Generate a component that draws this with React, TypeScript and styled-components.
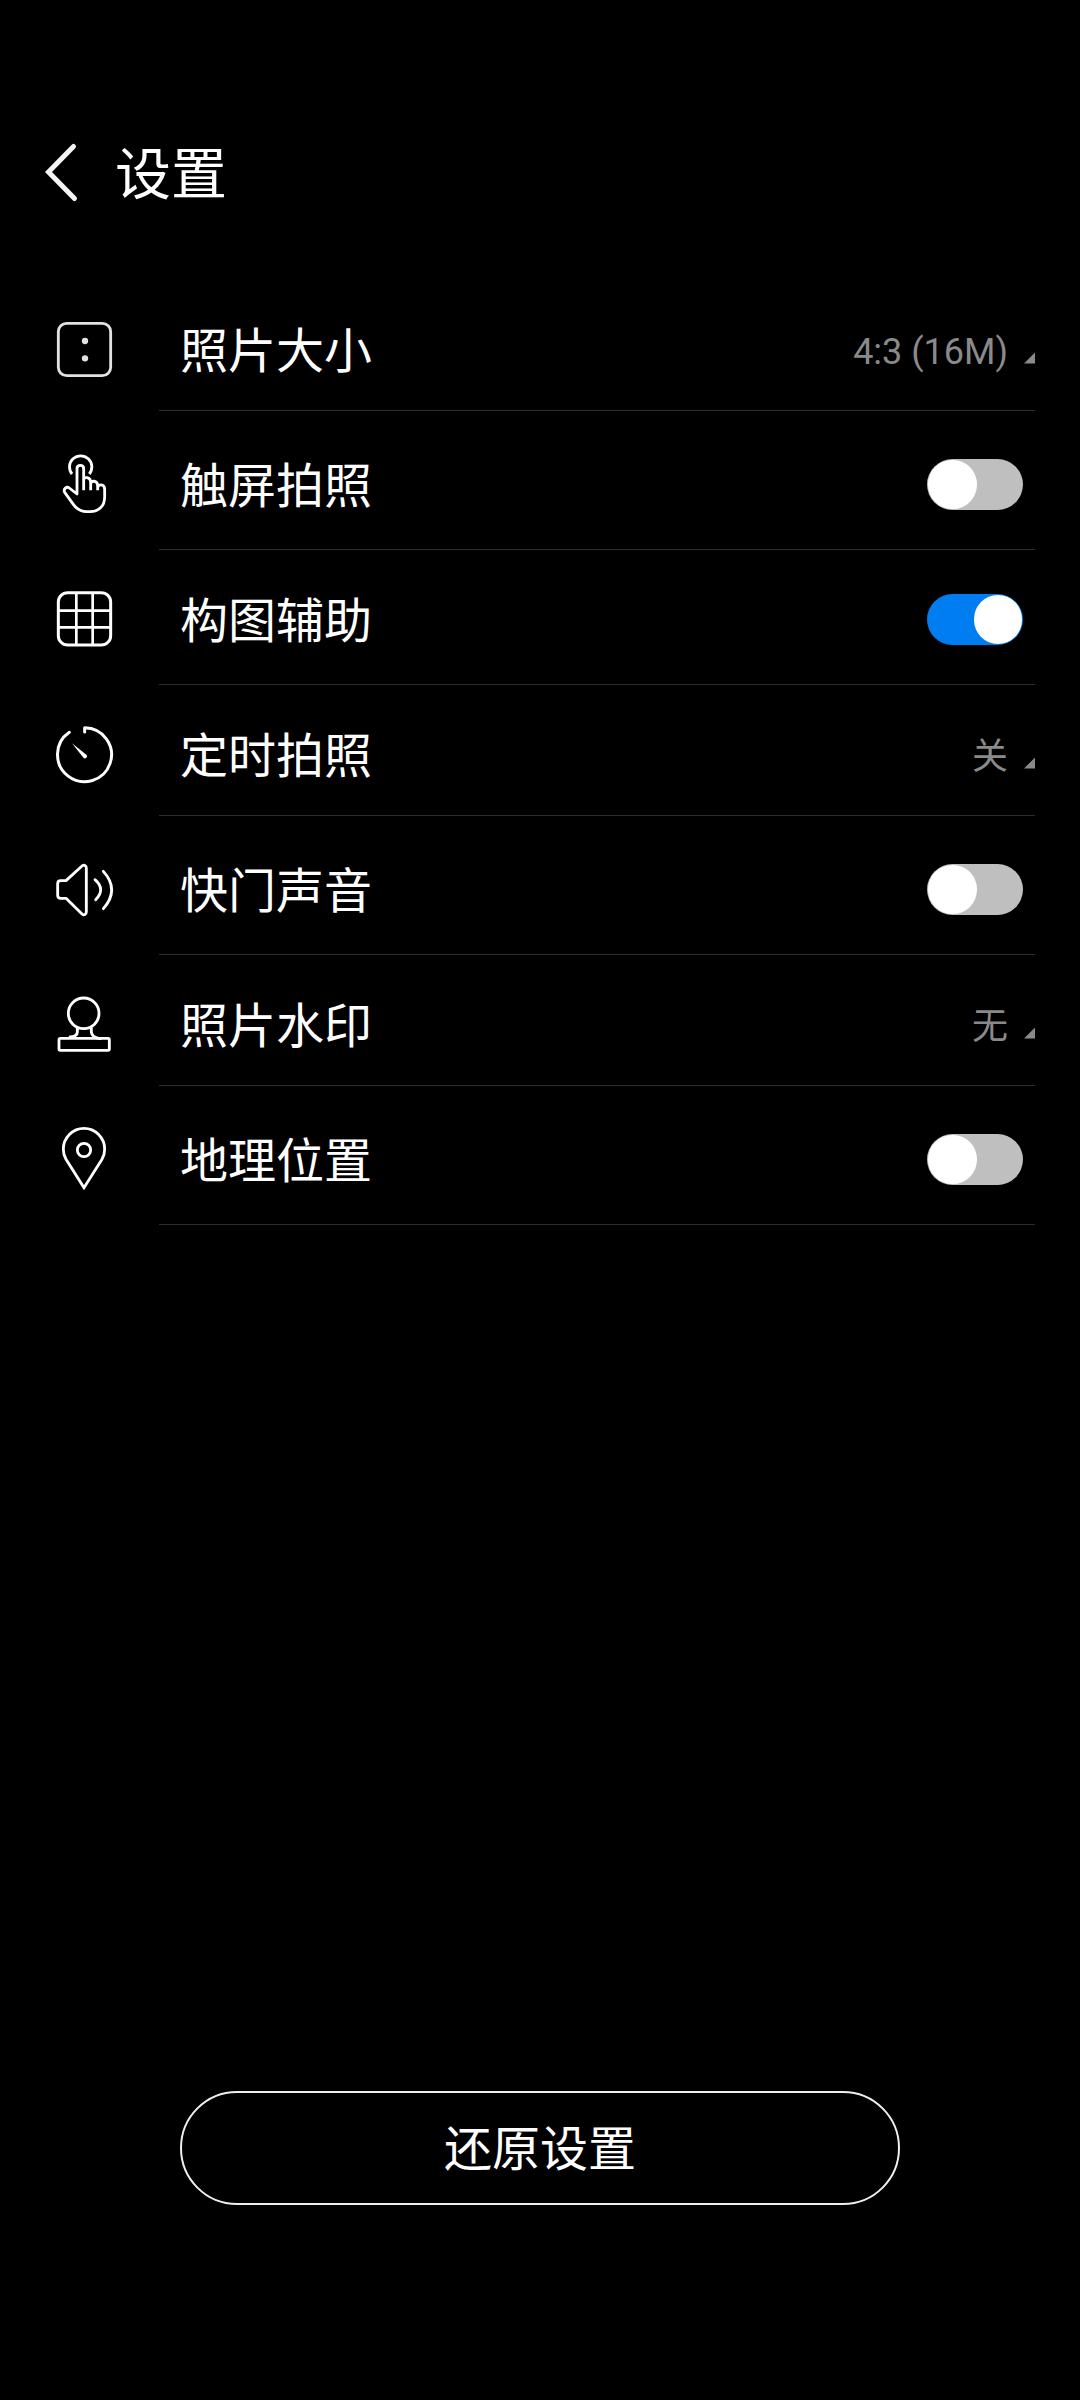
import React, { useState } from "react";
import styled, { createGlobalStyle } from "styled-components";

const GlobalStyle = createGlobalStyle`
  * { box-sizing: border-box; }
  body { margin: 0; background: #000; }
`;

const Screen = styled.main`
  display: flex;
  flex-direction: column;
  width: 1080px;
  height: 2400px;
  padding-bottom: 195px;
  background: #000;
  color: #fff;
  font-family: Roboto, "Noto Sans CJK SC", sans-serif;
`;

const Header = styled.header`
  display: flex;
  align-items: center;
  height: 282px;
  padding: 62px 0 0 42px;
`;

const BackIcon = styled.svg`
  width: 40px;
  height: 64px;
`;

const Title = styled.h1`
  margin: 0 0 0 33px;
  padding-top: 5px;
  font-size: 56px;
  font-weight: 400;
  line-height: 84px;
`;

const List = styled.ul`
  margin: 0;
  padding: 0;
  list-style: none;
`;

const Row = styled.li`
  display: flex;
  height: 135px;
  padding: 0 45px 0 44px;
`;

const RowIcon = styled.svg`
  flex: none;
  width: 80px;
  height: 81px;
  margin: 27px 35px 0 0;
  fill: none;
  stroke: #fff;
  stroke-width: 8.5;
  stroke-linecap: round;
  stroke-linejoin: round;
`;

const RowBody = styled.div<{ $toggle: boolean }>`
  display: flex;
  flex: 1;
  align-items: center;
  height: ${(p) => (p.$toggle ? 133 : 129)}px;
  padding: ${(p) => (p.$toggle ? "3px 12px 0 21px" : "7px 0 0 21px")};
  border-bottom: 1px solid #2d2d2d;
`;

const Label = styled.span`
  flex: 1;
  padding-top: 4px;
  font-size: 48px;
  line-height: 70px;
`;

const Value = styled.span`
  padding-top: 4px;
  color: #8a8a8a;
  font-size: 36px;
  line-height: 52px;
`;

const Corner = styled.span`
  width: 11px;
  height: 11px;
  margin: 17px 0 0 16px;
  background: #8a8a8a;
  clip-path: polygon(100% 0, 100% 100%, 0 100%);
`;

const Track = styled.button<{ $on: boolean }>`
  display: flex;
  align-items: center;
  justify-content: ${(p) => (p.$on ? "flex-end" : "flex-start")};
  width: 96px;
  height: 51px;
  padding: 1px;
  border: 0;
  border-radius: 26px;
  background: ${(p) => (p.$on ? "#007df0" : "#bfbfbf")};
`;

const Knob = styled.span`
  width: 48.5px;
  height: 48.5px;
  border-radius: 50%;
  background: #fff;
`;

const ResetButton = styled.button`
  width: 720px;
  height: 114px;
  margin: auto auto 0;
  padding: 4px 0 0;
  border: 2px solid #eee;
  border-radius: 57px;
  background: transparent;
  color: #fff;
  font-family: inherit;
  font-size: 48px;
  line-height: 70px;
`;

const icons = {
  size: (
    <g stroke="#e2e2e2">
      <rect x="43" y="43" width="157" height="157" rx="25" />
      <circle cx="123" cy="96" r="9.5" fill="#e2e2e2" stroke="none" />
      <circle cx="123" cy="148" r="9.5" fill="#e2e2e2" stroke="none" />
    </g>
  ),
  touch: (
    <>
      <path d="M84 90A33.5 33.5 0 1 1 136 90" strokeLinecap="butt" />
      <path
        strokeLinecap="butt"
        d="M119 139V74C119 61 99 61 99 74V150L76 132C68 126 57 135 62 145L88 181C98 195 108 203 128 203H138C164 203 182 187 182 158V136C182 119 161 119 161 132V139M161 136V126C161 108 140 108 140 120V139M140 126V115C140 99 119 96 119 108"
      />
    </>
  ),
  grid: (
    <>
      <rect x="43" y="41" width="157" height="157" rx="28" strokeWidth="9" />
      <path d="M97 43V196M146 43V196M45 95H198M45 145H198" strokeWidth="8" />
    </>
  ),
  timer: (
    <>
      <path d="M122 54V41A81 81 0 1 1 76 55" strokeWidth="9" />
      <path d="M84 88L128 123A6.5 6.5 0 0 1 119 132Z" fill="#fff" stroke="none" />
    </>
  ),
  sound: (
    <path d="M50 95H66L114 51C120 46 127 49 127 58V188C127 197 120 200 114 195L66 148H50Q41 148 41 139V104Q41 95 50 95ZM153 92Q186 121 155 152M178 67Q228 122 178 179" />
  ),
  stamp: (
    <>
      <circle cx="119" cy="88" r="46" />
      <rect x="45" y="163" width="151" height="36" rx="4" />
      <path d="M100 133V144Q100 157 78 159M142 133V144Q144 161 169 164" />
    </>
  ),
  pin: (
    <>
      <path
        strokeLinejoin="miter"
        d="M120 206L66 121C60 111 58 100 58 90A62 62 0 0 1 182 90C182 100 180 111 174 121Z"
      />
      <circle cx="120" cy="93" r="20" />
    </>
  ),
};

type Setting = { icon: keyof typeof icons; label: string; value?: string };

const settings: Setting[] = [
  { icon: "size", label: "照片大小", value: "4:3 (16M)" },
  { icon: "touch", label: "触屏拍照" },
  { icon: "grid", label: "构图辅助" },
  { icon: "timer", label: "定时拍照", value: "关" },
  { icon: "sound", label: "快门声音" },
  { icon: "stamp", label: "照片水印", value: "无" },
  { icon: "pin", label: "地理位置" },
];

export default function App() {
  const [enabled, setEnabled] = useState<Record<string, boolean>>({ grid: true });

  return (
    <Screen>
      <GlobalStyle />
      <Header>
        <BackIcon viewBox="0 0 40 64" fill="none" stroke="#f4f4f4" strokeWidth="5" strokeLinecap="round">
          <path d="M31.5 6.5L6.5 32L32.5 58.5" />
        </BackIcon>
        <Title>设置</Title>
      </Header>
      <List>
        {settings.map(({ icon, label, value }) => {
          const on = !!enabled[icon];
          return (
            <Row key={icon}>
              <RowIcon viewBox="0 0 240 243">{icons[icon]}</RowIcon>
              <RowBody $toggle={!value}>
                <Label>{label}</Label>
                {value ? (
                  <>
                    <Value>{value}</Value>
                    <Corner />
                  </>
                ) : (
                  <Track
                    $on={on}
                    role="switch"
                    aria-checked={on}
                    onClick={() => setEnabled({ ...enabled, [icon]: !on })}
                  >
                    <Knob />
                  </Track>
                )}
              </RowBody>
            </Row>
          );
        })}
      </List>
      <ResetButton>还原设置</ResetButton>
    </Screen>
  );
}
